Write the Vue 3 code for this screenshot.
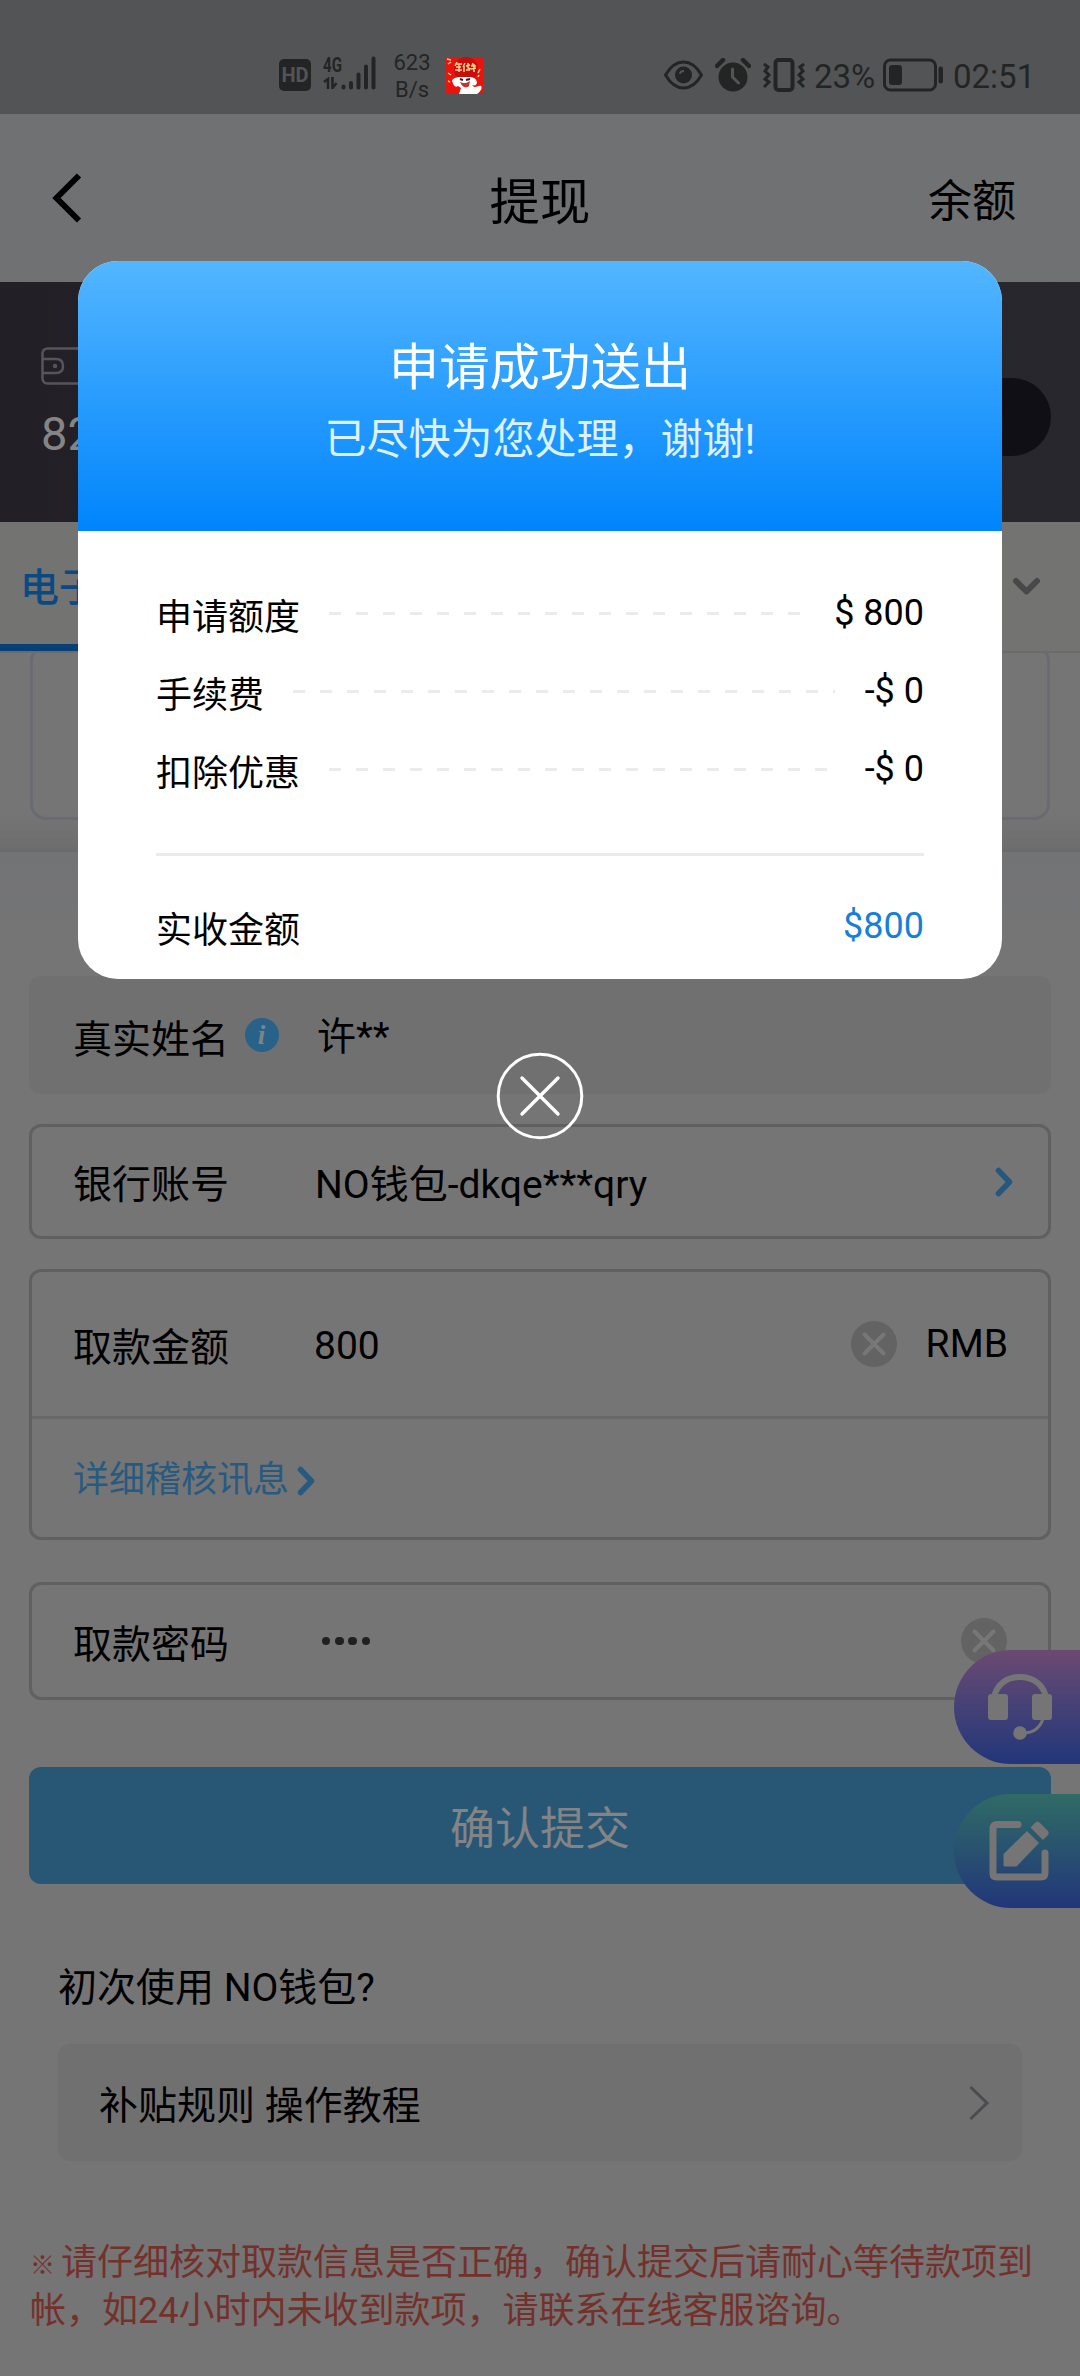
<script setup>
const rows = [
  { label: '申请额度', value: '$ 800' },
  { label: '手续费', value: '-$ 0' },
  { label: '扣除优惠', value: '-$ 0' },
]
</script>

<template>
  <div class="page">
    <div class="status">
      <div class="status-left">
        <span class="hd">HD</span>
        <span class="signal">
          <span class="net">4G</span>
          <svg class="bars" width="54" height="36" viewBox="0 0 54 36" fill="none" stroke="#232525">
            <path d="M1 27l4-3v10M9.500 22v12M9.500 33l4-5" stroke-width="2.600" />
            <path d="M20.500 32v1M28 28.500v4.500M35.500 20v13M43 12v21M50.500 4v29" stroke-width="4" stroke-linecap="round" transform="translate(0 -.5)" />
          </svg>
        </span>
        <span class="speed">623<br />B/s</span>
        <svg class="appicon" width="37" height="37" viewBox="0 0 37 37">
          <rect width="37" height="37" fill="#e8140e" />
          <circle cx="20" cy="12" r="12" fill="#c90d0d" />
          <g fill="none" stroke="#f3cf8e" stroke-width="1.500">
            <path d="M11 5l-2 4M10 7h6M10 10h5M9 13h7M13 7v8M19 6l-2 4M18 9v6M20 9l4-1M22 6v5l3 1M20 13h4M27 6l-1 3M25 9h5M28 7v8M25 12l5-1" />
            <path d="M1 2l4 1M2 7l3-2M2 16l3 2M34 12l-2 4M33 18l-1 2M2 24l2 1" />
          </g>
          <path d="M6 23c3-3 6-3 9-3h8c3 0 6 0 8 5 0 3-2 4-5 3l2 2c4 0 5-2 7-1 2 2-1 6-4 8H13l2-6-3-2c-3 2-5-1-6-6z" fill="#fff" />
          <path d="M14 25c4 2 7 1 10-1l-1 5c-3 3-7 1-9-4z" fill="#c93332" />
          <path d="M14 22l3 1M20 23l4-1" stroke="#222" stroke-width="2" />
        </svg>
      </div>
      <div class="status-right">
        <svg width="39" height="34" viewBox="0 0 39 34">
          <path d="M1.500 17Q9 4 19.500 4T37.500 17Q30 30 19.500 30T1.500 17z" fill="none" stroke="#232525" stroke-width="3" stroke-linejoin="round" />
          <circle cx="19.500" cy="17" r="8.500" fill="#232525" />
          <path d="M16 16q0-3 4-3" fill="none" stroke="#535456" stroke-width="1.800" />
        </svg>
        <svg class="alarm" width="36" height="34" viewBox="0 0 36 34" fill="none">
          <circle cx="18" cy="19" r="14.500" fill="#232525" />
          <path d="M2 8l6-6M34 8l-6-6" stroke="#232525" stroke-width="4.500" stroke-linecap="round" />
          <path d="M17.500 11v8l6 6" stroke="#535456" stroke-width="3" stroke-linecap="round" />
        </svg>
        <svg class="vibe" width="42" height="34" viewBox="0 0 42 34" fill="none" stroke="#232525">
          <rect x="12.500" y="2" width="17" height="30" rx="3" stroke-width="4" />
          <path d="M1 6l4 3-3 4 4 4-4 4 4 3-5 5M41 6l-4 3 3 4-4 4 4 4-4 3 5 5" stroke-width="3" />
        </svg>
        <span class="pct">23%</span>
        <svg class="batt" width="61" height="34" viewBox="0 0 61 34">
          <rect x="1.500" y="2" width="51" height="30" rx="6" fill="none" stroke="#232525" stroke-width="3" />
          <rect x="6" y="7" width="13" height="20" rx="3" fill="#232525" />
          <rect x="55.500" y="8.500" width="4.500" height="17" rx="2.200" fill="#232525" />
        </svg>
        <span class="clock">02:51</span>
      </div>
    </div>

    <div class="nav">
      <svg width="32" height="52" viewBox="0 0 32 52"><path d="M28 3.500L5.500 26L28 48.500" fill="none" stroke="#000" stroke-width="6" /></svg>
      <h1>提现</h1>
      <span class="nav-link">余额</span>
    </div>

    <div class="wallet">
      <div class="balance">
        <svg width="44" height="38" viewBox="0 0 44 38" fill="none" stroke="#57555a" stroke-width="2.500">
          <rect x="1.500" y="1.500" width="41" height="35" rx="5" />
          <path d="M2 12h13q7 0 7 7t-7 7H2" /><circle cx="14" cy="19" r="1" />
        </svg>
        <span>82</span>
      </div>
      <div class="pill"></div>
    </div>

    <div class="tabs">
      <div class="tab">电子钱包</div>
      <svg width="30" height="20" viewBox="0 0 30 20"><path d="M4 4l10.500 10.500L25 4" fill="none" stroke="#48484b" stroke-width="6" stroke-linecap="round" stroke-linejoin="round" /></svg>
    </div>
    <div class="promo"><div class="promo-card"></div></div>
    <div class="fade"></div>

    <div class="form">
      <div class="box filled">
        <span class="label">真实姓名</span>
        <span class="info">i</span>
        <span class="val name">许**</span>
      </div>
      <div class="box bank">
        <span class="label">银行账号</span>
        <span class="val">NO钱包-dkqe***qry</span>
        <svg class="end" width="19" height="30" viewBox="0 0 19 30"><path d="M3.500 3.500L14.500 15L3.500 26.500" fill="none" stroke="#24587f" stroke-width="5.500" stroke-linecap="round" stroke-linejoin="round" /></svg>
      </div>
      <div class="amount">
        <div class="amount-top">
          <span class="label">取款金额</span>
          <span class="val">800</span>
          <svg class="clear" width="46" height="46" viewBox="0 0 46 46"><circle cx="23" cy="23" r="23" fill="#636363" /><path d="M13.500 13.500l19 19M32.500 13.500l-19 19" stroke="#777" stroke-width="4" stroke-linecap="round" /></svg>
          <span class="cur">RMB</span>
        </div>
        <div class="audit">
          <span>详细稽核讯息</span>
          <svg width="19" height="30" viewBox="0 0 19 30"><path d="M3.500 3.500L14.500 15L3.500 26.500" fill="none" stroke="#285a80" stroke-width="5.500" stroke-linecap="round" stroke-linejoin="round" /></svg>
        </div>
      </div>
      <div class="box password">
        <span class="label">取款密码</span>
        <span class="dots"><i v-for="n in 4" :key="n"></i></span>
        <svg class="clear" width="46" height="46" viewBox="0 0 46 46"><circle cx="23" cy="23" r="23" fill="#636363" /><path d="M13.500 13.500l19 19M32.500 13.500l-19 19" stroke="#777" stroke-width="4" stroke-linecap="round" /></svg>
      </div>
      <div class="submit">确认提交</div>
      <div class="first">初次使用 NO钱包?</div>
      <div class="guide">
        <span>补贴规则 操作教程</span>
        <svg width="22" height="38" viewBox="0 0 22 38"><path d="M2.500 3L19 19L2.500 35" fill="none" stroke="#4b4b50" stroke-width="3" /></svg>
      </div>
      <p class="notice"><span class="mark">※</span>请仔细核对取款信息是否正确，确认提交后请耐心等待款项到帐，如24小时内未收到款项，请联系在线客服谘询。</p>
    </div>

    <div class="floats">
      <div class="float service">
        <svg width="66" height="68" viewBox="0 0 66 68">
          <path d="M7 24C10 11 20 4 33 4S56 11 59 24" fill="none" stroke="#757575" stroke-width="6" />
          <rect x="1" y="21" width="20" height="26" rx="3" fill="#757575" />
          <rect x="45" y="21" width="20" height="26" rx="3" fill="#757575" />
          <path d="M56 46Q51 60 36 60" fill="none" stroke="#757575" stroke-width="3" />
          <circle cx="33" cy="60" r="6.800" fill="#757575" />
        </svg>
      </div>
      <div class="float note">
        <svg width="60" height="60" viewBox="0 0 60 60">
          <path d="M29 3.500H8.500Q4 3.500 4 8v44.500Q4 56 8 56h44Q56 56 56 52V32" fill="none" stroke="#757575" stroke-width="7" stroke-linecap="round" />
          <path d="M38 10L50 22L27.500 45.500H16Q14.500 45.500 14.500 44V33z" fill="#757575" />
          <path d="M41.500 6.500L46 2q2.500-2.500 5 0l7.500 7.500q2.500 2.500 0 5L54 19z" fill="#757575" />
        </svg>
      </div>
    </div>

    <div class="overlay">
      <div class="modal">
        <div class="modal-head">
          <div class="modal-title">申请成功送出</div>
          <div class="modal-sub">已尽快为您处理，谢谢!</div>
        </div>
        <div class="modal-body">
          <div v-for="r in rows" :key="r.label" class="row">
            <span class="row-label">{{ r.label }}</span>
            <span class="dash"></span>
            <span class="row-value">{{ r.value }}</span>
          </div>
          <div class="rule"></div>
          <div class="row total">
            <span class="row-label">实收金额</span>
            <span class="row-value blue">$800</span>
          </div>
        </div>
      </div>
      <svg class="close" width="88" height="88" viewBox="0 0 88 88" fill="none" stroke="#fff" stroke-linecap="round">
        <circle cx="44" cy="44" r="41.800" stroke-width="3" />
        <path d="M26 26l36 36M62 26L26 62" stroke-width="3.400" />
      </svg>
    </div>
  </div>
</template>

<style>
body { margin: 0; background: #757575; }
</style>

<style scoped>
* { box-sizing: border-box; }
svg { display: block; flex: none; }
.page {
  position: relative; width: 1080px; height: 2376px; overflow: hidden;
  background: #757575; color: #000;
  font-family: Roboto, "Noto Sans CJK SC", sans-serif; font-size: 39px;
}
.status { height: 114px; background: #535456; color: #232525; display: flex; justify-content: space-between; padding: 50px 45px 0 279px; }
.status-left, .status-right { display: flex; height: 50px; }
.status-left { align-items: flex-start; }
.hd { width: 32px; height: 32px; margin-top: 9px; border-radius: 5px; background: #232525; color: #535456; font-size: 20px; line-height: 33px; font-weight: 700; text-align: center; }
.signal { position: relative; width: 54px; height: 36px; margin: 5px 0 0 12px; }
.net { position: absolute; left: 0; top: 1px; font-size: 21px; line-height: 19px; font-weight: 700; transform: scaleX(.72); transform-origin: left; }
.speed { margin: -1px 0 0 15px; width: 40px; text-align: center; font-size: 22px; line-height: 27px; }
.appicon { margin: 7px 0 0 14px; }
.status-right { padding-top: 8px; align-items: flex-start; font-size: 33px; line-height: 37px; }
.alarm { margin-left: 12px; }
.vibe { margin-left: 12px; }
.pct { margin-left: 9px; width: 63px; }
.batt { margin-left: 6px; }
.clock { margin-left: 9px; width: 82px; }
.nav { height: 168px; background: #707172; display: flex; align-items: center; justify-content: space-between; padding: 4px 64px 0 51px; }
.nav svg { margin-right: 69px; margin-top: -4px; }
h1 { margin: 0; font-size: 50.400px; font-weight: 400; line-height: 60px; padding-top: 6px; }
.nav-link { font-size: 44px; line-height: 52px; padding-top: 3px; }
.wallet { height: 240px; background: linear-gradient(90deg, #222026, #28272d); display: flex; justify-content: space-between; padding: 65px 29px 0 41px; }
.balance { color: #858585; font-size: 47px; }
.balance span { display: block; margin-top: 21px; line-height: 56px; }
.pill { width: 220px; height: 78px; margin-top: 31px; border-radius: 39px; background: #110f16; }
.tabs { height: 131px; background: #737372; border-bottom: 2px solid #6b6b6c; display: flex; justify-content: space-between; padding-right: 38px; }
.tab { width: 200px; height: 129px; padding-left: 20px; line-height: 133px; font-weight: 500; color: #0b4982; border-bottom: 7px solid #064075; white-space: nowrap; }
.tabs svg { margin-top: 55px; }
.promo { height: 199px; overflow: hidden; padding: 0 30px; background: linear-gradient(#757575 80%, #6e6e6e 97%, #6a6a6a); }
.promo-card { height: 175px; margin-top: -8px; border: 3px solid #686b72; border-radius: 16px; }
.fade { height: 96px; background: linear-gradient(#727375, #757575); }
.form { padding: 28px 29px 0; }
.box { height: 118px; border-radius: 12px; display: flex; align-items: center; padding: 0 44px; }
.label { width: 156px; line-height: 46px; }
.filled { background: #707070; }
.info { width: 34px; height: 34px; border-radius: 50%; margin: 0 0 0 16px; background: #286289; color: #7d8488; font: italic 700 27px/34px "Liberation Serif", serif; text-align: center; padding-right: 1px; }
.name { margin-left: 38px; line-height: 46px; padding-top: 3px; }
.bank { height: 115px; border: 3px solid #606060; margin-top: 30px; padding: 0 34px 0 41px; }
.bank .val { margin-left: 86px; line-height: 46px; }
.bank .label, .bank .val { padding-top: 7px; }
.filled .label { padding-top: 9px; }
.end { margin-left: auto; }
.amount { height: 271px; margin-top: 30px; border: 3px solid #606060; border-radius: 12px; }
.amount-top { height: 147px; border-bottom: 3px solid #696969; display: flex; align-items: center; padding: 0 40px 0 41px; }
.amount-top .label { padding-top: 7px; }
.amount-top .val { margin-left: 85px; padding-top: 4px; }
.clear { margin-left: auto; }
.cur { margin-left: 29px; }
.audit { display: flex; align-items: center; height: 118px; padding-left: 41px; font-size: 36px; color: #285a80; }
.audit span { line-height: 42px; padding-top: 3px; }
.audit svg { margin: 6px 0 0 8px; }
.password { height: 118px; margin-top: 42px; border: 3px solid #606060; padding: 0 41px; }
.dots { display: flex; gap: 4.800px; margin-left: 93px; }
.dots i { width: 8.400px; height: 8.400px; border-radius: 50%; background: #202022; }
.password .label { padding-top: 7px; }
.submit { height: 117px; margin-top: 67px; border-radius: 12px; background: #285675; color: #828485; font-size: 45px; line-height: 126px; text-align: center; }
.first { margin: 77px 29px 0; line-height: 54px; }
.guide { height: 117px; margin: 29px 29px 0; border-radius: 12px; background: #707070; display: flex; align-items: center; justify-content: space-between; padding: 0 32px 0 41px; }
.guide span { line-height: 46px; padding-top: 7px; }
.notice { margin: 78px 0 0; padding-left: 1px; font-size: 36px; line-height: 48px; color: #74312b; }
.mark { font-size: 25px; line-height: 1; font-weight: 900; margin-right: 6px; vertical-align: 1px; }
.floats { position: absolute; right: 0; top: 1650px; display: flex; flex-direction: column; gap: 30px; }
.float { width: 126px; height: 114px; border-radius: 57px 0 0 57px; padding-left: 33px; display: flex; align-items: center; }
.service { background: linear-gradient(#6b4a72, #454176 50%, #22367a); }
.note { background: linear-gradient(#306b65, #28516f 50%, #22367a); }
.note svg { margin-left: 2px; }
.overlay { position: absolute; left: 0; top: 0; width: 1080px; padding-top: 261px; display: flex; flex-direction: column; align-items: center; }
.modal { width: 924px; height: 718px; border-radius: 40px; overflow: hidden; background: #fff; }
.modal-head { height: 270px; background: linear-gradient(#53b6ff, #0084fc); color: #fff; text-align: center; padding-top: 77px; }
.modal-title { font-size: 50.400px; line-height: 60px; }
.modal-sub { margin-top: 17px; font-size: 42px; line-height: 50px; color: #dcf1ff; }
.modal-body { padding: 43px 78px 0; }
.row { display: flex; align-items: center; height: 78px; font-size: 36px; line-height: 42px; }
.row-label { padding-top: 9px; }
.dash { flex: 1; height: 3px; margin: 0 30px 0 29px; background: repeating-linear-gradient(90deg, #ebebeb 0 12px, transparent 12px 27px); }
.rule { height: 3px; background: #ebebeb; margin-top: 45px; }
.total { justify-content: space-between; margin-top: 31px; }
.blue { color: #1680d8; }
.close { margin-top: 73px; }
</style>
